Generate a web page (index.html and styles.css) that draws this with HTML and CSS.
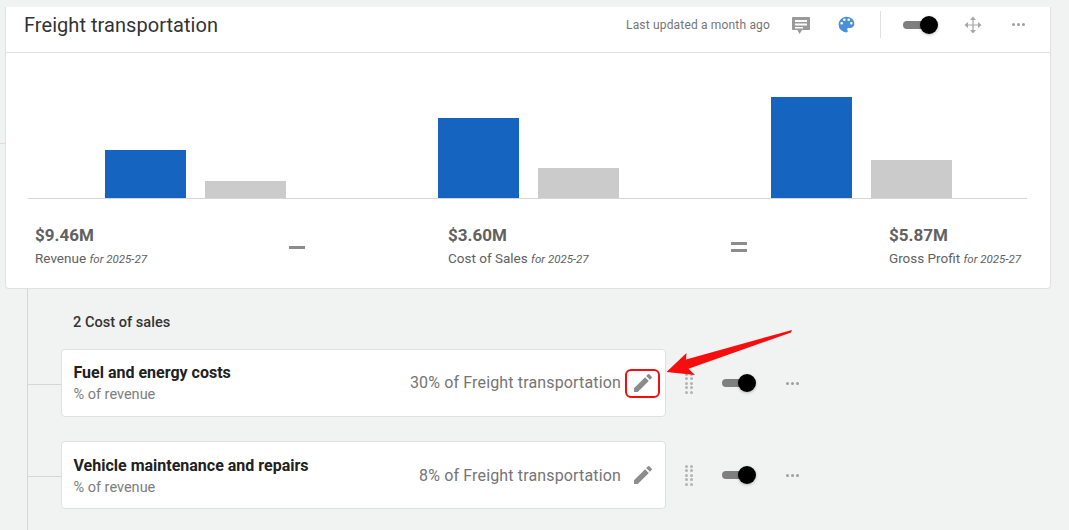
FILE: index.html
```html
<!DOCTYPE html>
<html lang="en">

<head>
  <meta charset="UTF-8">
  <title>Freight transportation</title>
  <link rel="stylesheet" href="styles.css">
</head>

<body>
  <div class="page">
    <div class="card">
      <div class="card-head">
        <div class="card-title">Freight transportation</div>
        <div class="card-tools">
          <span class="updated">Last updated a month ago</span>
          <svg class="tool-comment" width="24" height="24" viewBox="0 0 24 24"><path fill="#9a9a9a" fill-rule="evenodd" d="M4 4h16c.6 0 1 .4 1 1v11c0 .6-.4 1-1 1h-7l-2.500 4-2-4H4c-.6 0-1-.4-1-1V5c0-.6.4-1 1-1zm2 3v2h12V7H6zm0 3.500v2h12v-2H6zM6 14v1.500h8V14H6z"/></svg>
          <svg class="tool-palette" width="21" height="21" viewBox="0 0 24 24"><path fill="#4a90d9" d="M12 3a9 9 0 0 0 0 18c.83 0 1.500-.67 1.500-1.500 0-.39-.15-.74-.39-1.010-.23-.26-.38-.61-.38-.99 0-.83.67-1.500 1.500-1.500H16c2.760 0 5-2.240 5-5 0-4.420-4.030-8-9-8zm-5.500 9a1.500 1.500 0 1 1 0-3 1.500 1.500 0 0 1 0 3zm3-4a1.500 1.500 0 1 1 0-3 1.500 1.500 0 0 1 0 3zm5 0a1.500 1.500 0 1 1 0-3 1.500 1.500 0 0 1 0 3zm3 4a1.500 1.500 0 1 1 0-3 1.500 1.500 0 0 1 0 3z"/></svg>
          <span class="tool-sep"></span>
          <span class="switch"><span class="switch-knob"></span></span>
          <svg class="tool-move" width="18" height="18" viewBox="0 0 18 18"><path fill="none" stroke="#a6a6a6" stroke-width="1.200" d="M9 2v14M2 9h14"/><path fill="#a6a6a6" d="M9 .5 12 4H6zM9 17.500 12 14H6zM.5 9 4 6v6zM17.500 9 14 6v6z"/></svg>
          <span class="dots"><i></i><i></i><i></i></span>
        </div>
      </div>

      <div class="chart">
        <div class="chart-group">
          <div class="bar bar-blue bar-h48"></div>
          <div class="bar bar-grey bar-h17"></div>
        </div>
        <div class="chart-group">
          <div class="bar bar-blue bar-h80"></div>
          <div class="bar bar-grey bar-h30"></div>
        </div>
        <div class="chart-group">
          <div class="bar bar-blue bar-h101"></div>
          <div class="bar bar-grey bar-h38"></div>
        </div>
      </div>

      <div class="totals">
        <div class="total total-revenue">
          <div class="total-value">$9.46M</div>
          <div class="total-label">Revenue <em>for 2025-27</em></div>
        </div>
        <div class="sign sign-minus"></div>
        <div class="total total-cost">
          <div class="total-value">$3.60M</div>
          <div class="total-label">Cost of Sales <em>for 2025-27</em></div>
        </div>
        <div class="sign sign-equals"></div>
        <div class="total total-profit">
          <div class="total-value">$5.87M</div>
          <div class="total-label">Gross Profit <em>for 2025-27</em></div>
        </div>
      </div>
    </div>

    <div class="tree">
      <div class="tree-title">2 Cost of sales</div>

      <div class="row">
        <div class="item">
          <div class="item-text">
            <div class="item-name">Fuel and energy costs</div>
            <div class="item-sub">% of revenue</div>
          </div>
          <div class="item-value">30% of Freight transportation</div>
          <span class="edit edit-marked">
            <svg width="24" height="24" viewBox="0 0 24 24"><path fill="#8c8c8c" d="M3 17.250V21h3.750L17.810 9.940l-3.750-3.750L3 17.250zM20.710 7.040a1 1 0 0 0 0-1.410l-2.340-2.340a1 1 0 0 0-1.410 0l-1.830 1.830 3.750 3.750 1.830-1.830z"/></svg>
          </span>
        </div>
        <span class="grip"><i></i><i></i><i></i><i></i><i></i><i></i><i></i><i></i><i></i><i></i></span>
        <span class="switch"><span class="switch-knob"></span></span>
        <span class="dots"><i></i><i></i><i></i></span>
      </div>

      <div class="row">
        <div class="item">
          <div class="item-text">
            <div class="item-name">Vehicle maintenance and repairs</div>
            <div class="item-sub">% of revenue</div>
          </div>
          <div class="item-value">8% of Freight transportation</div>
          <span class="edit">
            <svg width="24" height="24" viewBox="0 0 24 24"><path fill="#8c8c8c" d="M3 17.250V21h3.750L17.810 9.940l-3.750-3.750L3 17.250zM20.710 7.040a1 1 0 0 0 0-1.410l-2.340-2.340a1 1 0 0 0-1.410 0l-1.830 1.830 3.750 3.750 1.830-1.830z"/></svg>
          </span>
        </div>
        <span class="grip"><i></i><i></i><i></i><i></i><i></i><i></i><i></i><i></i><i></i><i></i></span>
        <span class="switch"><span class="switch-knob"></span></span>
        <span class="dots"><i></i><i></i><i></i></span>
      </div>
    </div>

    <svg class="arrow" width="130" height="50" viewBox="0 0 130 50"><path fill="#f60d0d" d="M1.500 43 21.500 24 21 30.500 127 1 126 3.500 23.500 39.800 30 46Z"/></svg>
  </div>
</body>

</html>
```

FILE: styles.css
```css
html, body {
  margin: 0;
  height: 100%;
  overflow: hidden;
}

body {
  background-color: #f1f3f2;
  font-family: Roboto, sans-serif;
  color: #212121;
}

.page {
  position: relative;
  height: 530px;
  padding: 7px 18px 0 5px;
  box-sizing: border-box;
}

/* stub of the tree line that runs behind the card */
.page::before {
  content: "";
  position: absolute;
  left: 0;
  top: 143px;
  width: 5px;
  height: 1px;
  background-color: #dcdcdc;
}

.card {
  background-color: white;
  border: 1px solid #e0e0e0;
  border-top: none;
  border-radius: 0 0 4px 4px;
  height: 282px;
  box-sizing: border-box;
}

.card-head {
  display: flex;
  justify-content: space-between;
  align-items: center;
  height: 46px;
  padding: 0 25px 10px 18px;
  border-bottom: 1px solid #e0e0e0;
  box-sizing: border-box;
}

.card-title {
  font-size: 20px;
  letter-spacing: 0.05px;
  color: #333;
}

.card-tools {
  display: flex;
  align-items: center;
}

.updated {
  font-size: 12px;
  letter-spacing: 0.17px;
  color: #757575;
  margin-right: 19px;
}

.tool-comment {
  margin-right: 23px;
}

.tool-palette {
  margin-right: 23px;
}

.tool-sep {
  width: 1px;
  height: 27px;
  background-color: #e0e0e0;
  margin-right: 22px;
}

.tool-move {
  margin: 0 30px 0 33px;
}

.switch {
  position: relative;
  display: inline-block;
  width: 28px;
  height: 8px;
  background-color: #7f7f7f;
  border-radius: 4px;
}

.switch-knob {
  position: absolute;
  top: -5px;
  right: -7px;
  width: 18px;
  height: 18px;
  background-color: black;
  border-radius: 50%;
  box-shadow: 0 1px 3px rgba(0, 0, 0, 0.25);
}

.dots {
  display: inline-flex;
  gap: 2px;
}

.dots i {
  width: 3px;
  height: 3px;
  border-radius: 50%;
  background-color: #9e9e9e;
}

.chart {
  display: flex;
  align-items: flex-end;
  height: 146px;
  margin: 0 23px 0 22px;
  padding-left: 77px;
  border-bottom: 1px solid #d6d6d6;
  box-sizing: border-box;
}

.chart-group {
  flex: none;
  display: flex;
  align-items: flex-end;
  gap: 19px;
  width: 333px;
}

.bar {
  width: 81px;
}

.bar-blue { background-color: #1565c0; }
.bar-grey { background-color: #cbcbcb; }
.bar-h48 { height: 48px; }
.bar-h17 { height: 17px; }
.bar-h80 { height: 80px; }
.bar-h30 { height: 30px; }
.bar-h101 { height: 101px; }
.bar-h38 { height: 38px; }

.totals {
  display: flex;
  align-items: center;
  padding: 25px 29px 0 29px;
  color: #616161;
}

.total-value {
  font-size: 17px;
  font-weight: 700;
  line-height: 23px;
}

.total-label {
  font-size: 13.500px;
  line-height: 22px;
}

.total-label em {
  font-size: 11.500px;
}

.total-revenue { width: 254px; }
.total-cost { width: 283px; }
.total-profit { margin-left: auto; }

.sign {
  width: 16px;
  box-sizing: border-box;
}

.sign-minus {
  height: 3px;
  background-color: #8c8c8c;
  margin-right: 143px;
}

.sign-equals {
  height: 10px;
  border-top: 3px solid #8c8c8c;
  border-bottom: 3px solid #8c8c8c;
}

.tree {
  margin-left: 22px;
  padding: 0 0 0 33px;
  height: 241px;
  border-left: 1px solid #d6d6d6;
  box-sizing: border-box;
}

.tree-title {
  font-size: 14.600px;
  font-weight: 500;
  color: #333;
  line-height: 20px;
  padding: 23px 0 17px 12px;
}

.row {
  position: relative;
  display: flex;
  align-items: center;
  margin-bottom: 24.400px;
}

.row::before {
  content: "";
  position: absolute;
  left: -33px;
  top: 35px;
  width: 33px;
  height: 1px;
  background-color: #d6d6d6;
}

.item {
  display: flex;
  align-items: center;
  width: 605px;
  height: 68px;
  padding: 0 5px 0 11.500px;
  background-color: white;
  border: 1px solid #e0e0e0;
  border-radius: 4px;
  box-sizing: border-box;
}

.item-text {
  flex: 1;
  padding-top: 1.600px;
}

.item-name {
  font-size: 16px;
  font-weight: 700;
  line-height: 22px;
}

.item-sub {
  font-size: 14.500px;
  line-height: 20px;
  margin-top: 1px;
  color: #7d7d7d;
}

.item-value {
  font-size: 16px;
  letter-spacing: 0.15px;
  color: #757575;
  margin: 0 4px 0.400px 0;
}

.edit {
  display: flex;
  align-items: center;
  justify-content: center;
  width: 35px;
  height: 29px;
  box-sizing: border-box;
  border: 2px solid transparent;
  border-radius: 6px;
}

.edit-marked {
  border-color: #f60d0d;
}

.grip {
  display: grid;
  grid-template-columns: 3px 3px;
  gap: 1.500px;
  margin: 0 29.500px 0 19px;
}

.grip i {
  width: 3px;
  height: 3px;
  background-color: #b3b3b3;
  border-radius: 50%;
}

.row .switch {
  width: 27px;
  margin-right: 36.500px;
}

.arrow {
  position: absolute;
  left: 665px;
  top: 329px;
}
```
